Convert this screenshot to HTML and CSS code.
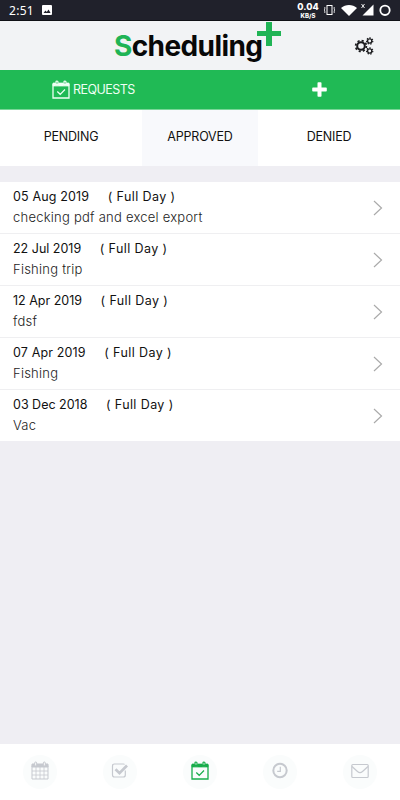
FILE: index.html
```html
<!DOCTYPE html>
<html lang="en">
<head>
  <meta charset="UTF-8">
  <meta name="viewport" content="width=device-width, initial-scale=1.0">
  <title>Scheduling+</title>
  <link rel="stylesheet" href="styles.css">
</head>
<body>
  <div class="status-bar">
    <span class="time">2:51</span>
    <svg class="photo" width="10" height="10" viewBox="0 0 10 10"><rect width="10" height="10" rx="1" fill="#fff"/><path d="M1.500 8l2-2.600 1.300 1.500L6.500 4.500 8.600 8z" fill="#20212b"/></svg>
    <div class="speed"><b>0.04</b><span>KB/S</span></div>
    <svg class="system" width="70" height="14" viewBox="0 0 70 14">
      <g fill="none" stroke="#fff"><rect x="3" y="2.500" width="5" height="9"/><path d="M.8 4v2l-.5 1 .5 1v2M10.200 4v2l.5 1-.5 1v2" stroke-width=".8"/></g>
      <path d="M17 5c4.500-4 11.500-4 16 0l-8 8z" fill="#fff"/>
      <path d="M49.500 1.500v11H38.500z" fill="#fff"/>
      <path d="M37.500 1l3 4m0-4l-3 4" stroke="#fff" stroke-width=".9"/>
      <circle cx="61" cy="7.300" r="4.700" fill="none" stroke="#fff" stroke-width="1.800"/>
    </svg>
  </div>

  <header class="header">
    <h1 class="logo"><span>S</span>cheduling</h1>
    <svg class="logo-plus" width="24" height="24" viewBox="0 0 24 24"><path d="M9 0h6v9h9v5h-9v10H9V14H0V9h9z" fill="#20b455"/></svg>
    <svg class="settings" width="20" height="18" viewBox="0 0 20 18" fill="none" stroke="#1b1b1e">
      <circle cx="7" cy="9" r="3.800" stroke-width="2"/>
      <circle cx="7" cy="9" r="5.400" stroke-width="1.700" stroke-dasharray="2.120 2.120"/>
      <circle cx="15.700" cy="4" r="2.100" stroke-width="1.300"/>
      <circle cx="15.700" cy="4" r="3.100" stroke-width="1.200" stroke-dasharray="1.390 1.390"/>
      <circle cx="15.700" cy="14" r="2.100" stroke-width="1.300"/>
      <circle cx="15.700" cy="14" r="3.100" stroke-width="1.200" stroke-dasharray="1.390 1.390"/>
    </svg>
  </header>

  <div class="toolbar">
    <div class="toolbar-title">
      <svg width="18" height="19" viewBox="0 0 18 19"><use href="#cal-check"/></svg>
      <span>REQUESTS</span>
    </div>
    <div class="toolbar-add">
      <svg width="15" height="15" viewBox="0 0 15 15"><path d="M5.500 1q0-.8.800-.8h2.400q.8 0 .8.800v4.500H14q.8 0 .8.800v2.400q0 .8-.8.800H9.500V14q0 .8-.8.800H6.300q-.8 0-.8-.8V9.500H1q-.8 0-.8-.8V6.300q0-.8.800-.8h4.500z" fill="#fff"/></svg>
    </div>
  </div>

  <div class="tabs">
    <div class="tab">PENDING</div>
    <div class="tab active">APPROVED</div>
    <div class="tab">DENIED</div>
  </div>

  <div class="list">
    <div class="item">
      <div class="info">
        <p class="date date-wide"><span>05 Aug 2019</span><span class="type">( Full Day )</span></p>
        <p class="note">checking pdf and excel export</p>
      </div>
      <svg class="arrow" width="10" height="16" viewBox="0 0 10 16"><path d="M1 1l7.500 7L1 15"/></svg>
    </div>
    <div class="item">
      <div class="info">
        <p class="date"><span>22 Jul 2019</span><span class="type">( Full Day )</span></p>
        <p class="note">Fishing trip</p>
      </div>
      <svg class="arrow" width="10" height="16" viewBox="0 0 10 16"><path d="M1 1l7.500 7L1 15"/></svg>
    </div>
    <div class="item">
      <div class="info">
        <p class="date"><span>12 Apr 2019</span><span class="type">( Full Day )</span></p>
        <p class="note">fdsf</p>
      </div>
      <svg class="arrow" width="10" height="16" viewBox="0 0 10 16"><path d="M1 1l7.500 7L1 15"/></svg>
    </div>
    <div class="item">
      <div class="info">
        <p class="date date-wide"><span>07 Apr 2019</span><span class="type">( Full Day )</span></p>
        <p class="note">Fishing</p>
      </div>
      <svg class="arrow" width="10" height="16" viewBox="0 0 10 16"><path d="M1 1l7.500 7L1 15"/></svg>
    </div>
    <div class="item">
      <div class="info">
        <p class="date"><span>03 Dec 2018</span><span class="type">( Full Day )</span></p>
        <p class="note">Vac</p>
      </div>
      <svg class="arrow" width="10" height="16" viewBox="0 0 10 16"><path d="M1 1l7.500 7L1 15"/></svg>
    </div>
  </div>

  <nav class="bottom-nav">
    <div class="nav-item"><span class="circle">
      <svg width="18" height="19" viewBox="0 0 18 19" fill="none" stroke="currentColor"><path d="M1 4.500h16V18H1z"/><path d="M1 3h16v3H1z" fill="currentColor"/><path d="M1 10h16M1 14h16M5 6v12M9 6v12M13 6v12" stroke-width=".8"/><rect x="3.700" y="1" width="2" height="4" rx="1" fill="#fafcfc"/><rect x="12.300" y="1" width="2" height="4" rx="1" fill="#fafcfc"/></svg>
    </span></div>
    <div class="nav-item"><span class="circle">
      <svg width="18" height="19" viewBox="0 0 18 19" fill="none" stroke="currentColor"><path d="M14.300 9.500V14q0 2-2 2H3.500q-2 0-2-2V5q0-2 2-2h8.800q.8 0 1.300.4" stroke-width="1.200"/><path d="M4.500 8.200l4 4 7.500-7.700" stroke-width="2.700"/></svg>
    </span></div>
    <div class="nav-item active"><span class="circle">
      <svg width="18" height="19" viewBox="0 0 18 19"><g id="cal-check" fill="none" stroke="currentColor"><path d="M1 4.500h16V18H1z" stroke-width="1.300"/><path d="M1 3h2.500v2.500h3.200V3h4.600v2.500h3.200V3H17v3H1z" fill="currentColor" stroke-width=".7"/><path d="M4 5V2q0-1 1-1t1 1v3M12 5V2q0-1 1-1t1 1v3M5.300 11.500L8.200 14.300l4.800-4.800" stroke-width="1.200"/></g></svg>
    </span></div>
    <div class="nav-item"><span class="circle">
      <svg width="18" height="19" viewBox="0 0 18 19" fill="none" stroke="currentColor"><circle cx="9" cy="9.500" r="6.700" stroke-width="2"/><path d="M9.300 5.800v4.500H6.200" stroke-width="1.200"/></svg>
    </span></div>
    <div class="nav-item"><span class="circle">
      <svg width="18" height="19" viewBox="0 0 18 19" fill="none" stroke="currentColor" stroke-width="1.200"><rect x=".8" y="3.500" width="16.400" height="13" rx="1"/><path d="M1 5.500l5.500 5q2.500 2.300 5 0L17 5.500"/></svg>
    </span></div>
  </nav>
</body>
</html>
```

FILE: styles.css
```css
* {
  box-sizing: border-box;
}

body {
  margin: 0;
  height: 100vh;
  display: flex;
  flex-direction: column;
  background: #efeef3;
  color: #111;
  font-family: Inter, "Liberation Sans", sans-serif;
  font-size: 13px;
}

svg {
  display: block;
  flex-shrink: 0;
}

.status-bar {
  height: 21px;
  flex-shrink: 0;
  display: flex;
  align-items: center;
  padding: 0 6px 0 9px;
  background: #20212b;
  border-bottom: 1px solid #101116;
  color: #fff;
}

.time {
  font-family: "Noto Sans", sans-serif;
  font-size: 12px;
  letter-spacing: 0.3px;
  width: 33px;
}

.speed {
  margin-left: auto;
  margin-right: 5px;
  width: 22px;
  display: flex;
  flex-direction: column;
  align-items: center;
  font-weight: 800;
}

.speed b {
  font-size: 9px;
  line-height: 11px;
  font-weight: 800;
}

.speed span {
  font-size: 6px;
  line-height: 8px;
}

.header {
  position: relative;
  height: 49px;
  flex-shrink: 0;
  display: flex;
  align-items: center;
  background: #f2f3f5;
}

.logo {
  margin: 0 0 0 114px;
  padding-top: 1px;
  font-size: 28px;
  line-height: 49px;
  font-weight: 700;
  letter-spacing: -0.6px;
  color: #080808;
}

.logo span {
  color: #20b455;
}

/* the plus hangs over the last letter of the logo */
.logo-plus {
  position: absolute;
  left: 257px;
  top: 1px;
}

.settings {
  margin-left: auto;
  margin-right: 26px;
}

.toolbar {
  height: 40px;
  flex-shrink: 0;
  display: flex;
  align-items: center;
  background: #20ba55;
  border-bottom: 1px solid #79d698;
  color: #effff4;
}

.toolbar-title {
  flex: 1;
  display: flex;
  align-items: center;
  gap: 3px;
  padding-left: 52px;
  font-size: 12.5px;
  letter-spacing: -0.55px;
}

.toolbar-add {
  width: 176px;
  padding-left: 88px;
}

.tabs {
  height: 56px;
  flex-shrink: 0;
  display: flex;
  background: #fff;
}

.tab {
  flex: 1;
  padding-top: 17px;
  line-height: 20px;
  text-align: center;
  font-size: 12.5px;
  letter-spacing: -0.2px;
}

.tab.active {
  flex: 0 0 116px;
  background: #f8f9fc;
}

.list {
  margin-top: 16px;
  background: #fff;
}

.item {
  height: 51.9px;
  display: flex;
  align-items: center;
  justify-content: space-between;
  padding: 0 17px 0 13px;
  border-bottom: 1px solid #efeff1;
}

.item:last-child {
  padding-bottom: 1px;
  border-bottom: none;
}

.info p {
  margin: 0;
  line-height: 21px;
  white-space: nowrap;
}

.date {
  display: flex;
  gap: 18.5px;
  font-size: 12.5px;
}

.date-wide span:first-child {
  letter-spacing: 0.15px;
}

.type {
  letter-spacing: 0.4px;
}

.note {
  color: #1c1c1c;
  font-weight: 300;
  letter-spacing: 0.24px;
}

.arrow {
  margin-top: 1px;
  fill: none;
  stroke: #aaa;
  stroke-width: 1.2;
}

.bottom-nav {
  margin-top: auto;
  height: 56px;
  flex-shrink: 0;
  display: flex;
  background: #fff;
}

.nav-item {
  flex: 1;
  display: flex;
  align-items: center;
  justify-content: center;
  color: #c6c9cf;
}

.nav-item.active {
  color: #18ad4b;
}

.circle {
  width: 34px;
  height: 34px;
  display: flex;
  align-items: center;
  justify-content: center;
  padding-bottom: 3px;
  border-radius: 50%;
  background: #fafcfc;
}
```
